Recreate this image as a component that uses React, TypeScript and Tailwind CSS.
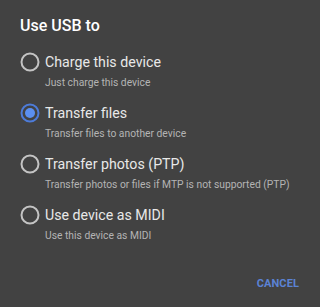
const options = [
  { label: "Charge this device", sub: "Just charge this device", checked: false },
  { label: "Transfer files", sub: "Transfer files to another device", checked: true },
  { label: "Transfer photos (PTP)", sub: "Transfer photos or files if MTP is not supported (PTP)", checked: false },
  { label: "Use device as MIDI", sub: "Use this device as MIDI", checked: false },
];

function Radio({ checked }: { checked: boolean }) {
  return (
    <svg width="20" height="20" viewBox="0 0 20 20" className="shrink-0">
      <circle cx="10" cy="10" r="8.5" fill="none" stroke={checked ? "#4d7bd8" : "#c4c4c4"} strokeWidth="2" />
      {checked && <circle cx="10" cy="10" r="5" fill="#5b8ff0" />}
    </svg>
  );
}

export default function App() {
  return (
    <div
      className="w-[320px] h-[307px] bg-[#424242] pt-[16px] overflow-hidden"
      style={{ fontFamily: "Roboto, 'Liberation Sans', sans-serif" }}
    >
      <h1 className="px-[20px] text-[16px] leading-[20px] font-medium text-white">Use USB to</h1>
      <div className="mt-[16px] flex flex-col gap-[12px]">
        {options.map((o) => (
          <div key={o.label} className="px-[20px]">
            <div className="flex items-center gap-[5px]">
              <Radio checked={o.checked} />
              <span className="text-[14.2px] leading-[20px] text-[#e8e8e8]">{o.label}</span>
            </div>
            <p className="mt-[3px] pl-[25px] text-[10.3px] leading-[16px] text-[#b4b4b4] whitespace-nowrap">
              {o.sub}
            </p>
          </div>
        ))}
      </div>
      <div className="mt-[32px] flex justify-end pr-[21px]">
        <span className="text-[11px] leading-[16px] font-bold tracking-[0.1px] text-[#5b82d4]">CANCEL</span>
      </div>
    </div>
  );
}
